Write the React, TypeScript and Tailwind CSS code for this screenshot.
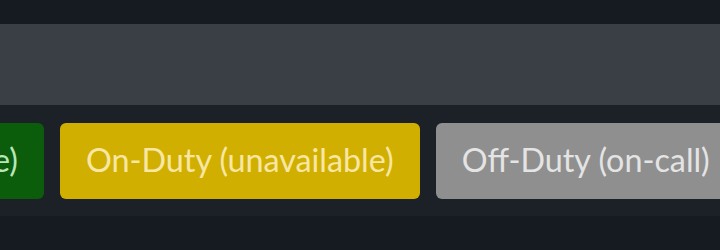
export default function App() {
  return (
    <div className="w-[720px] h-[250px] overflow-hidden bg-[#161a21] font-['Lato','Noto_Sans',sans-serif] flex flex-col">
      <div className="h-[24px] shrink-0" />
      <div className="h-[81px] shrink-0 bg-[#3a3f46]" />
      <div className="h-[111px] shrink-0 bg-[#1c2027] flex items-center gap-4 overflow-hidden">
        <div className="w-[44px] shrink-0 flex justify-end">
          <button className="shrink-0 h-[76px] pl-[26px] pr-[26px] rounded-md bg-[#0b5c0b] text-[#b9e6b9] text-[32.3px] whitespace-nowrap">
            On-Duty (available)
          </button>
        </div>
        <button className="shrink-0 h-[76px] pl-[26px] pr-[26px] rounded-md bg-[#d1af00] text-[#f8e7a4] text-[32.3px] whitespace-nowrap">
          On-Duty (unavailable)
        </button>
        <button className="shrink-0 h-[76px] pl-[26px] pr-[26px] rounded-md bg-[#8f8f8f] text-[#e4e4e4] text-[32.3px] whitespace-nowrap">
          Off-Duty (on-call)
        </button>
      </div>
      <div className="flex-1" />
    </div>
  );
}
